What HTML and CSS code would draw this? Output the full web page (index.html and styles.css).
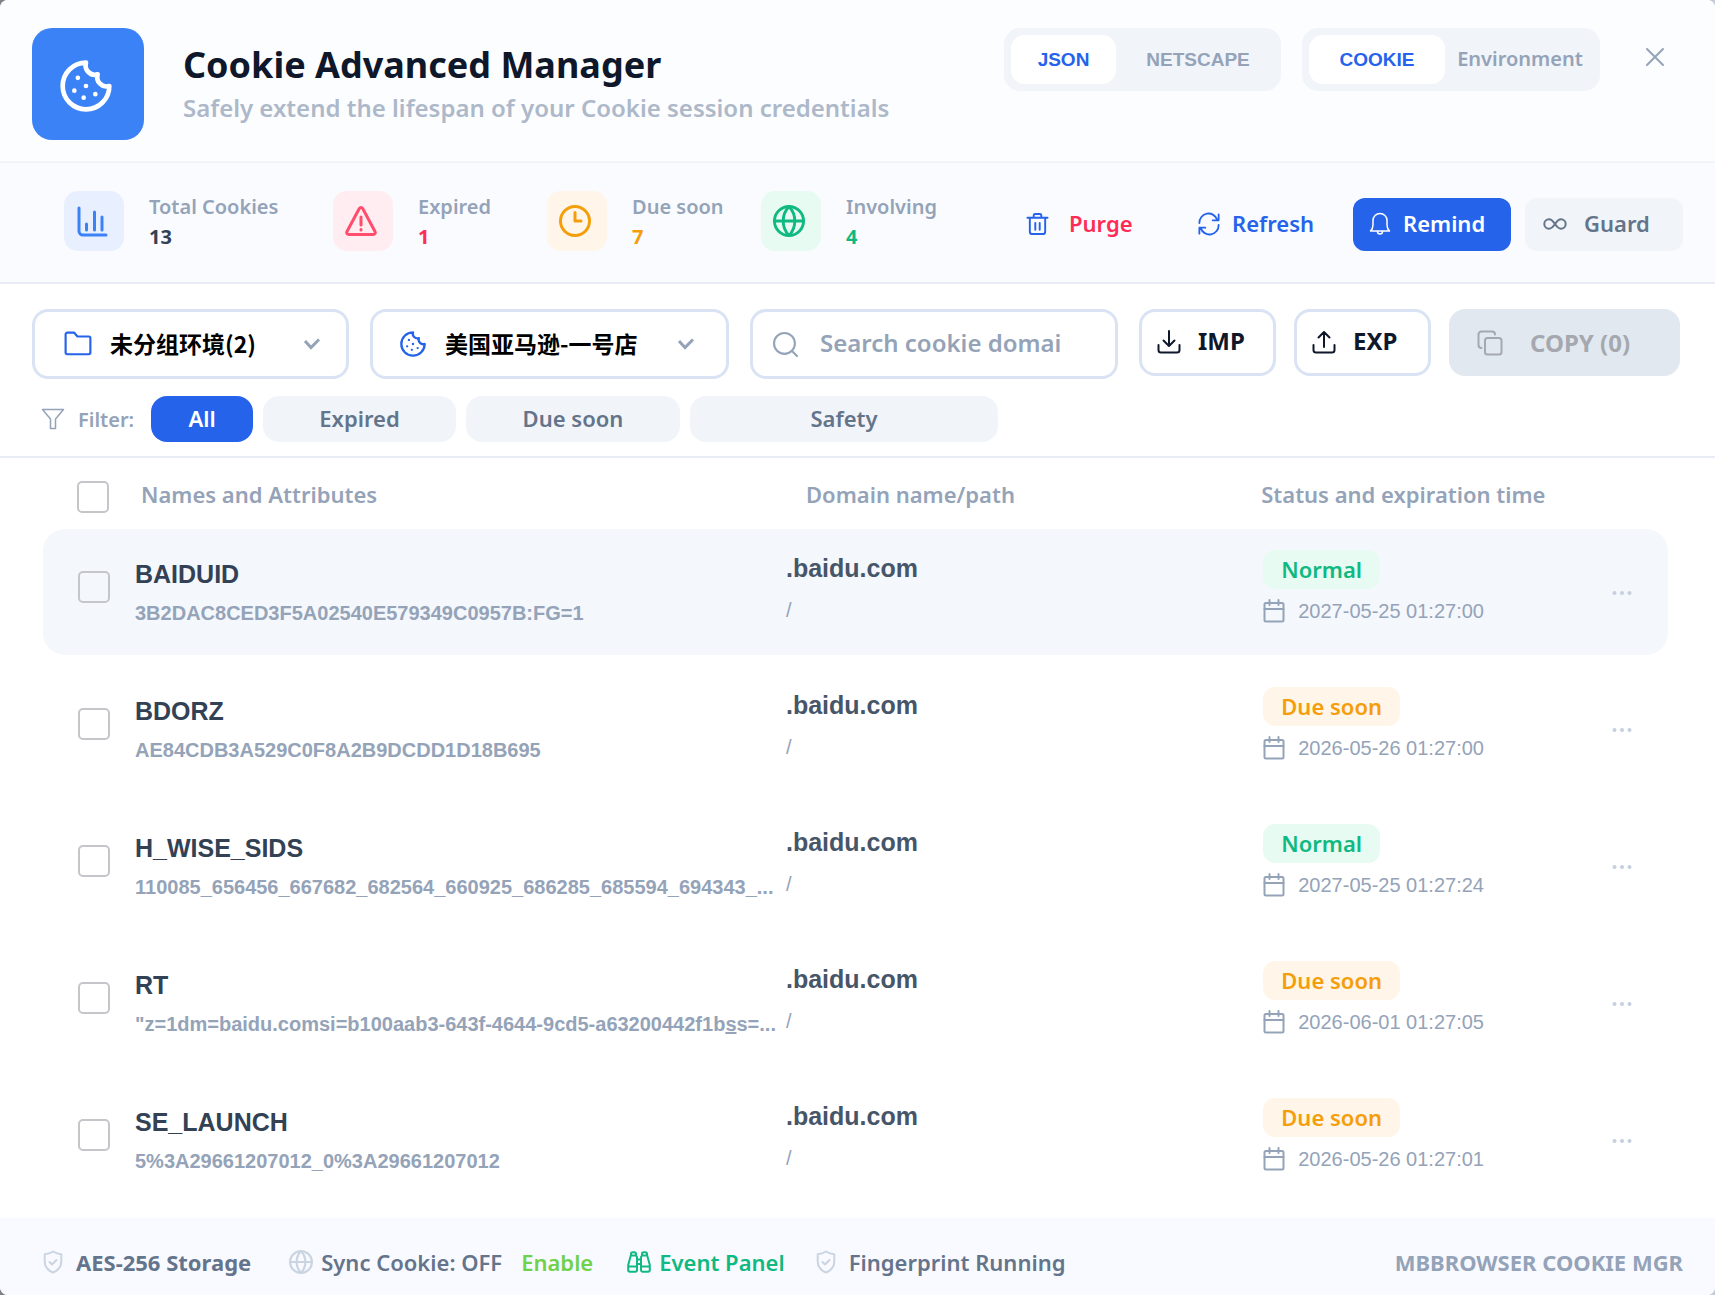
FILE: index.html
```html
<!DOCTYPE html>
<html lang="en">
<head>
<meta charset="utf-8">
<meta name="viewport" content="width=device-width, initial-scale=1">
<title>Cookie Advanced Manager</title>
<link rel="stylesheet" href="styles.css">
</head>
<body>
<svg class="sprite" aria-hidden="true">
  <symbol id="cookie" viewBox="0 0 24 24"><path d="M12 2a10 10 0 1 0 10 10 4 4 0 0 1-5-5 4 4 0 0 1-5-5"/><path d="M8.500 8.500v.01M16 15.500v.01M12 12v.01M11 17v.01M7 14v.01"/></symbol>
  <symbol id="globe" viewBox="1 1 22 22"><circle cx="12" cy="12" r="10"/><path d="M12 2a14.500 14.500 0 0 0 0 20 14.500 14.500 0 0 0 0-20M2 12h20"/></symbol>
  <symbol id="shield" viewBox="0 0 20 24"><path d="M10 1.500c2.500 1.600 5 2.500 8.300 2.800v7c0 5.500-3.300 9.200-8.300 11.200-5-2-8.300-5.700-8.300-11.200v-7C5 4 7.500 3.100 10 1.500z"/><path d="M6.500 12l2.500 2.500 4.500-4.500"/></symbol>
  <symbol id="chevron" viewBox="0 0 18 14"><path d="M2 4l6 6.500 8-8"/></symbol>
  <symbol id="calendar" viewBox="0 0 22 24"><rect x="1.500" y="4" width="19" height="18.500" rx="1.500"/><path d="M1.500 10h19M6.500 1v5M15.500 1v5"/></symbol>
  <symbol id="dots" viewBox="0 0 20 6"><circle cx="2.500" cy="3" r="2"/><circle cx="10" cy="3" r="2"/><circle cx="17.500" cy="3" r="2"/></symbol>
</svg>

<main class="window">
  <header class="header">
    <div class="logo"><svg class="icon"><use href="#cookie"/></svg></div>
    <div class="heading">
      <h1>Cookie Advanced Manager</h1>
      <p>Safely extend the lifespan of your Cookie session credentials</p>
    </div>
    <div class="segments">
      <div class="segment format">
        <button class="selected" type="button">JSON</button>
        <button type="button">NETSCAPE</button>
      </div>
      <div class="segment scope">
        <button class="selected" type="button">COOKIE</button>
        <button class="env" type="button">Environment</button>
      </div>
      <button class="close" type="button" aria-label="Close"><svg class="icon" viewBox="0 0 20 20"><path d="M2 2l16 16M18 2L2 18"/></svg></button>
    </div>
  </header>

  <section class="stats">
    <dl class="metrics">
      <div class="metric total">
        <span class="tile"><svg class="icon" viewBox="0 0 32 32"><path d="M3 3v23a4 4 0 0 0 4 4h23M10.500 19v6M18.500 7v18M26 12v13"/></svg></span>
        <div class="figure"><dt>Total Cookies</dt><dd>13</dd></div>
      </div>
      <div class="metric expired">
        <span class="tile"><svg class="icon" viewBox="0 0 32 32"><path d="M14.300 3.500a2 2 0 0 1 3.400 0l12.300 23a2 2 0 0 1-1.700 3H3.700a2 2 0 0 1-1.700-3zM16 12v8M16 24.500v.5"/></svg></span>
        <div class="figure"><dt>Expired</dt><dd>1</dd></div>
      </div>
      <div class="metric due">
        <span class="tile"><svg class="icon" viewBox="0 0 32 32"><circle cx="16" cy="16" r="14.500"/><path d="M16 7.500V16h6"/></svg></span>
        <div class="figure"><dt>Due soon</dt><dd>7</dd></div>
      </div>
      <div class="metric involving">
        <span class="tile"><svg class="icon globe"><use href="#globe"/></svg></span>
        <div class="figure"><dt>Involving</dt><dd>4</dd></div>
      </div>
    </dl>
    <div class="actions">
      <button class="purge" type="button"><svg class="icon" viewBox="0 0 24 24"><path d="M1.500 5.500h21M8 5.500V3a1.500 1.500 0 0 1 1.500-1.500h5A1.500 1.500 0 0 1 16 3v2.500M4 5.500V20a2.500 2.500 0 0 0 2.500 2.500h11A2.500 2.500 0 0 0 20 20V5.500M9.700 11v7M14.300 11v7"/></svg>Purge</button>
      <button class="refresh" type="button"><svg class="icon" viewBox="0 0 24 24"><path d="M1.500 11A10 10 0 0 1 21 7.500M22.500 1.500V8H16M22.500 13A10 10 0 0 1 3 16.500M1.500 22.500V16H8"/></svg>Refresh</button>
      <button class="remind" type="button"><svg class="icon" viewBox="0 0 24 24"><path d="M2.500 19c1.500-1.500 2.500-3.500 2.500-6V8.500a7 7 0 0 1 14 0V13c0 2.500 1 4.500 2.500 6zM9.500 19.500a2.500 2.500 0 0 0 5 0"/></svg>Remind</button>
      <button class="guard" type="button"><svg class="icon" viewBox="0 0 24 24"><path d="M12 12c-2-3-3.500-4.700-6-4.700a4.700 4.700 0 0 0 0 9.400c2.500 0 4-1.700 6-4.700s3.500-4.700 6-4.700a4.700 4.700 0 0 1 0 9.400c-2.500 0-4-1.700-6-4.700z"/></svg>Guard</button>
    </div>
  </section>

  <section class="tools">
    <div class="toolbar">
      <label class="field group">
        <svg class="icon" viewBox="0 0 26 24"><path d="M1.500 3A1.500 1.500 0 0 1 3 1.500h6.500L12.500 5H23a1.500 1.500 0 0 1 1.500 1.500V20a1.500 1.500 0 0 1-1.500 1.500H3A1.500 1.500 0 0 1 1.500 20z"/></svg>
        <select aria-label="Environment group"><option>未分组环境(2)</option></select>
        <svg class="chevron"><use href="#chevron"/></svg>
      </label>
      <label class="field shop">
        <svg class="icon"><use href="#cookie"/></svg>
        <select aria-label="Environment"><option>美国亚马逊-一号店</option></select>
        <svg class="chevron"><use href="#chevron"/></svg>
      </label>
      <label class="field search">
        <svg class="icon" viewBox="0 0 24 24"><circle cx="11" cy="11" r="10"/><path d="M18.500 18.500L23 23"/></svg>
        <input type="search" placeholder="Search cookie domai" aria-label="Search cookie domain">
      </label>
      <div class="transfer">
        <button class="outline" type="button"><svg class="icon" viewBox="0 0 24 24"><path d="M1.500 15v5a2.500 2.500 0 0 0 2.500 2.500h16a2.500 2.500 0 0 0 2.500-2.500v-5M12 1v15M6.500 10.500L12 16l5.500-5.500"/></svg>IMP</button>
        <button class="outline" type="button"><svg class="icon" viewBox="0 0 24 24"><path d="M1.500 15v5a2.500 2.500 0 0 0 2.500 2.500h16a2.500 2.500 0 0 0 2.500-2.500v-5M12 17V2M6.500 7.500L12 2l5.500 5.500"/></svg>EXP</button>
        <button class="copy" type="button" disabled><svg class="icon" viewBox="0 0 26 26"><rect x="8" y="8" width="16.500" height="16.500" rx="2.500"/><path d="M4.500 18A3 3 0 0 1 1.500 15V4.500a3 3 0 0 1 3-3H15a3 3 0 0 1 3 3"/></svg>COPY (0)</button>
      </div>
    </div>
    <div class="filters">
      <svg class="icon" viewBox="0 0 24 22"><path d="M1.500 1.500h21L14.500 11v9.500h-5V11z"/></svg>
      <span>Filter:</span>
      <button class="all" type="button">All</button>
      <button class="f-expired" type="button">Expired</button>
      <button class="f-due" type="button">Due soon</button>
      <button class="f-safety" type="button">Safety</button>
    </div>
  </section>

  <section class="list">
    <table>
      <colgroup><col class="c-check"><col class="c-name"><col class="c-domain"><col><col class="c-more"></colgroup>
      <thead>
        <tr><th><input type="checkbox" aria-label="Select all"></th><th>Names and Attributes</th><th>Domain name/path</th><th>Status and expiration time</th><th></th></tr>
      </thead>
      <tbody>
        <tr class="active">
          <td><input type="checkbox" aria-label="Select BAIDUID"></td>
          <td><div class="name">BAIDUID</div><div class="value">3B2DAC8CED3F5A02540E579349C0957B:FG=1</div></td>
          <td><div class="domain">.baidu.com</div><div class="path">/</div></td>
          <td><span class="badge ok">Normal</span><div class="date"><svg class="icon"><use href="#calendar"/></svg>2027-05-25 01:27:00</div></td>
          <td><button class="more" type="button" aria-label="More"><svg><use href="#dots"/></svg></button></td>
        </tr>
        <tr>
          <td><input type="checkbox" aria-label="Select BDORZ"></td>
          <td><div class="name">BDORZ</div><div class="value">AE84CDB3A529C0F8A2B9DCDD1D18B695</div></td>
          <td><div class="domain">.baidu.com</div><div class="path">/</div></td>
          <td><span class="badge soon">Due soon</span><div class="date"><svg class="icon"><use href="#calendar"/></svg>2026-05-26 01:27:00</div></td>
          <td><button class="more" type="button" aria-label="More"><svg><use href="#dots"/></svg></button></td>
        </tr>
        <tr>
          <td><input type="checkbox" aria-label="Select H_WISE_SIDS"></td>
          <td><div class="name">H_WISE_SIDS</div><div class="value">110085_656456_667682_682564_660925_686285_685594_694343_...</div></td>
          <td><div class="domain">.baidu.com</div><div class="path">/</div></td>
          <td><span class="badge ok">Normal</span><div class="date"><svg class="icon"><use href="#calendar"/></svg>2027-05-25 01:27:24</div></td>
          <td><button class="more" type="button" aria-label="More"><svg><use href="#dots"/></svg></button></td>
        </tr>
        <tr>
          <td><input type="checkbox" aria-label="Select RT"></td>
          <td><div class="name">RT</div><div class="value">"z=1dm=baidu.comsi=b100aab3-643f-4644-9cd5-a63200442f1b<u>s</u>s=...</div></td>
          <td><div class="domain">.baidu.com</div><div class="path">/</div></td>
          <td><span class="badge soon">Due soon</span><div class="date"><svg class="icon"><use href="#calendar"/></svg>2026-06-01 01:27:05</div></td>
          <td><button class="more" type="button" aria-label="More"><svg><use href="#dots"/></svg></button></td>
        </tr>
        <tr>
          <td><input type="checkbox" aria-label="Select SE_LAUNCH"></td>
          <td><div class="name">SE_LAUNCH</div><div class="value">5%3A29661207012_0%3A29661207012</div></td>
          <td><div class="domain">.baidu.com</div><div class="path">/</div></td>
          <td><span class="badge soon">Due soon</span><div class="date"><svg class="icon"><use href="#calendar"/></svg>2026-05-26 01:27:01</div></td>
          <td><button class="more" type="button" aria-label="More"><svg><use href="#dots"/></svg></button></td>
        </tr>
      </tbody>
    </table>
  </section>

  <footer class="footer">
    <span class="note storage"><svg class="icon"><use href="#shield"/></svg>AES-256 Storage</span>
    <span class="note sync"><svg class="icon"><use href="#globe"/></svg>Sync Cookie: OFF</span>
    <a class="enable" href="#">Enable</a>
    <a class="note events" href="#"><svg class="icon" viewBox="0 0 24 22"><path d="M4 4.500V3a1.800 1.800 0 0 1 1.800-1.800h1.400A1.800 1.800 0 0 1 9 3v1.500zM15 4.500V3a1.800 1.800 0 0 1 1.800-1.800h1.400A1.800 1.800 0 0 1 20 3v1.500zM3.800 4.500L1.200 14v5a1.800 1.800 0 0 0 1.800 1.800h5.200A1.800 1.800 0 0 0 10 19V6L9 4.500M20.200 4.500l2.600 9.500v5a1.800 1.800 0 0 1-1.800 1.800h-5.200A1.800 1.800 0 0 1 14 19V6l1-1.500M1.200 15.500h8.800M14 15.500h8.800M10 8.500h4M10 13h4"/></svg>Event Panel</a>
    <span class="note finger"><svg class="icon"><use href="#shield"/></svg>Fingerprint Running</span>
    <span class="brand">MBBROWSER COOKIE MGR</span>
  </footer>
</main>
</body>
</html>
```
FILE: styles.css
```css
* { box-sizing: border-box; }

body {
  margin: 0;
  background: linear-gradient(90deg, #7d8188, #c6cdd8);
  font-family: "Noto Sans", "Noto Sans CJK SC", sans-serif;
  font-size: 22px;
  font-weight: 600;
  color: #64748b;
}

button, input, select {
  margin: 0;
  padding: 0;
  border: 0;
  background: none;
  font: inherit;
  color: inherit;
}

h1, p, dl, dd { margin: 0; }
a { color: inherit; text-decoration: none; }

.sprite { display: none; }

.icon {
  flex: none;
  width: 24px;
  height: 24px;
  fill: none;
  stroke: currentColor;
  stroke-width: 2;
  stroke-linecap: round;
  stroke-linejoin: round;
}

.window {
  display: flex;
  flex-direction: column;
  min-height: 100vh;
  overflow: hidden;
  border-radius: 8px;
  background: #fff;
}

/* Header */
.header {
  display: flex;
  align-items: flex-start;
  gap: 39px;
  padding: 28px 26px 21px 32px;
  border-bottom: 2px solid #f1f4f9;
  background: #fcfdff;
}

.logo {
  display: flex;
  flex: none;
  align-items: center;
  justify-content: center;
  width: 112px;
  height: 112px;
  padding: 4px 4px 0 0;
  border-radius: 20px;
  background: #3b82f6;
  color: #fff;
}
.logo .icon { width: 56px; height: 56px; }

.heading { padding-top: 12px; white-space: nowrap; }
.heading h1 { font-size: 36px; line-height: 50px; font-weight: 700; color: #0f172a; }
.heading p { font-size: 24px; line-height: 36px; color: #adb8c9; }

.segments { display: flex; gap: 21px; margin-left: auto; }

.segment {
  display: flex;
  height: 63px;
  padding: 7px;
  border-radius: 16px;
  background: #f1f4f9;
  font-family: "Liberation Sans", sans-serif;
  font-size: 19px;
  font-weight: 700;
  color: #94a3b8;
}
.segment button { border-radius: 14px; }
.segment .selected { background: #fff; color: #2563eb; }
.format button:first-child { width: 105px; }
.format button:last-child { width: 158px; padding-left: 6px; }
.scope .selected { width: 136px; }
.segment .env {
  width: 148px;
  padding: 0 0 2px 2px;
  font-family: "Noto Sans", sans-serif;
  font-size: 20px;
  font-weight: 600;
}

.close { width: 68px; height: 60px; color: #94a3b8; }
.close .icon { width: 20px; height: 20px; }

/* Statistics */
.stats {
  display: flex;
  align-items: center;
  justify-content: space-between;
  height: 121px;
  padding: 0 32px 0 64px;
  border-bottom: 2px solid #e8edf5;
  background: #f9fbff;
}

.metrics { display: flex; margin-bottom: 4px; font-size: 20px; line-height: 30px; }
.metric { display: flex; gap: 25px; width: 214px; height: 60px; white-space: nowrap; }
.metric.total { width: 269px; }
.figure { padding-top: 1px; }
.metric dt { color: #94a3b8; }
.metric dd { font-weight: 700; }

.tile {
  display: flex;
  flex: none;
  align-items: center;
  width: 60px;
  height: 60px;
  padding-left: 12px;
  border-radius: 14px;
}
.tile .icon { width: 32px; height: 32px; stroke-width: 3; }
.tile .globe { stroke-width: 2; }

.total .tile { background: #e8efff; color: #3b82f6; }
.total dd { color: #334155; }
.expired .tile { background: #ffedf1; color: #ff4d6d; }
.expired dd { color: #ff2d55; }
.due .tile { background: #fff5e8; color: #f59e0b; }
.due dd { color: #f59e0b; }
.involving .tile { background: #e8fbf3; color: #10b981; }
.involving dd { color: #10b981; }

.actions { display: flex; padding-top: 4px; }
.actions button {
  display: flex;
  align-items: center;
  height: 53px;
  padding: 0 0 4px;
  border-radius: 12px;
  white-space: nowrap;
}
.actions .icon { margin-top: 3px; }
.purge { gap: 20px; width: 172px; color: #ff2d55; }
.purge .icon { width: 23px; color: #2563eb; }
.refresh { gap: 12px; width: 155px; color: #2563eb; }
.refresh .icon { width: 22px; }
.actions .remind {
  gap: 11px;
  width: 158px;
  margin-right: 14px;
  padding-left: 15px;
  background: #2563eb;
  color: #fff;
}
.guard { gap: 17px; width: 158px; }
.actions .guard { padding-left: 18px; background: #f1f4f9; }
.remind .icon { stroke-width: 1.5px; }

/* Toolbar and filters */
.tools {
  padding: 25px 35px 14px 32px;
  border-bottom: 2px solid #e8edf5;
}

.toolbar { display: flex; align-items: flex-start; gap: 21px; font-size: 24px; }

.field {
  display: flex;
  align-items: center;
  min-width: 0;
  height: 70px;
  border: 3px solid #d9e3f3;
  border-radius: 16px;
}
.field.group { flex: 1 1 317px; padding: 0 25px 0 29px; }
.field.shop { flex: 1 1 359px; padding: 0 31px 0 26px; }
.field.search { flex: 1 1 368px; gap: 22px; padding: 0 20px; color: #94a3b8; }
.field .icon { width: 28px; height: 26px; color: #2563eb; }
.shop .icon { height: 28px; }
.field.search .icon { width: 25px; height: 25px; color: #94a3b8; }
.field select {
  flex: 1;
  min-width: 0;
  margin-left: 18px;
  padding-bottom: 2px;
  appearance: none;
  font-family: "Noto Sans CJK SC", sans-serif;
  font-size: 23px;
  font-weight: 700;
  color: #000;
}
.field input { flex: 1; min-width: 0; padding-bottom: 3px; appearance: none; outline: 0; }
.field input::placeholder { color: #94a3b8; opacity: 1; }
.chevron {
  flex: none;
  width: 18px;
  height: 14px;
  fill: none;
  stroke: #94a3b8;
  stroke-width: 3;
}

.transfer { display: flex; flex: none; gap: 18px; }
.transfer button {
  display: flex;
  align-items: center;
  height: 67px;
  border-radius: 16px;
  font-weight: 700;
  white-space: nowrap;
}
.transfer .outline {
  gap: 17px;
  width: 137px;
  padding: 0 0 4px 15px;
  border: 3px solid #d9e3f3;
  color: #0f172a;
}
.outline .icon { margin-top: 2px; }
.transfer .copy {
  gap: 27px;
  width: 231px;
  padding-left: 28px;
  background: #e2e8f0;
  color: #a5a8ae;
}
.copy .icon { width: 26px; height: 26px; }

.filters { display: flex; align-items: center; gap: 10px; margin-top: 17px; }
.filters .icon { margin-left: 9px; color: #94a3b8; stroke-width: 1.5px; }
.filters span { width: 63px; margin-left: 3px; font-size: 20px; color: #94a3b8; }
.filters button { height: 46px; padding-bottom: 2px; border-radius: 16px; background: #f1f4f9; }
.filters .all { width: 102px; background: #2563eb; color: #fff; }
.f-expired { width: 193px; }
.f-due { width: 214px; }
.f-safety { width: 308px; }

/* Cookie list */
.list { flex: 1; padding: 0 47px 0 43px; }

table {
  width: 100%;
  table-layout: fixed;
  border-collapse: separate;
  border-spacing: 0 11px;
}
.c-check { width: 92px; }
.c-name { width: 40%; }
.c-domain { width: 29%; }
.c-more { width: 120px; }

th {
  height: 49px;
  padding: 0;
  text-align: left;
  font-weight: 600;
  white-space: nowrap;
  color: #94a3b8;
}
th:nth-child(2) { padding-left: 6px; }
th:nth-child(3) { padding-left: 21px; }
th:nth-child(4) { padding-left: 5px; }

td { height: 126px; padding: 0; vertical-align: top; white-space: nowrap; }
td:first-child { padding-top: 42px; border-radius: 22px 0 0 22px; }
td:nth-child(2) { padding-top: 29px; }
td:nth-child(3) { padding: 23px 0 0 1px; }
td:nth-child(4) { padding: 21px 0 0 7px; }
td:last-child { padding: 48px 36px 0 0; text-align: right; border-radius: 0 22px 22px 0; }
.active td { background: #f4f7fc; }

input[type="checkbox"] {
  display: block;
  width: 32px;
  height: 32px;
  margin-left: 35px;
  appearance: none;
  border: 2px solid #c4c6ca;
  border-radius: 5px;
}
th input[type="checkbox"] { margin: 6px 0 0 34px; }

.name, .value, .domain, .path, .date { font-family: "Liberation Sans", sans-serif; }
.name, .domain { font-size: 25px; line-height: 32px; font-weight: 700; color: #334155; }
.domain { color: #475569; }
.value, .path { margin-top: 7px; font-size: 20px; line-height: 32px; font-weight: 700; color: #94a3b8; }
.path { margin-top: 10px; font-weight: 400; }

.badge {
  display: inline-block;
  padding: 0 18px;
  border-radius: 12px;
  line-height: 39px;
}
.ok { background: #e8fbf3; color: #10b981; }
.soon { background: #fff5e8; color: #f59e0b; }

.date {
  display: flex;
  align-items: center;
  gap: 13px;
  margin-top: 8px;
  font-size: 20px;
  font-weight: 400;
  line-height: 28px;
  color: #94a3b8;
}
.date .icon { width: 22px; }

.more svg { display: block; width: 20px; height: 6px; fill: #c5cfdd; }
.more { height: 32px; }

/* Footer */
.footer {
  display: flex;
  align-items: center;
  height: 77px;
  padding: 11px 32px 0 43px;
  background: #f8faff;
  white-space: nowrap;
}
.note { display: flex; align-items: center; }
.note .icon { color: #cbd5e1; }
.storage { gap: 13px; margin-right: 38px; font-weight: 700; }
.storage .icon, .finger .icon { width: 20px; }
.sync { gap: 8px; margin-right: 19px; }
.enable { margin-right: 34px; color: #70d14b; }
.note.events { gap: 8px; margin-right: 31px; color: #10b981; }
.events .icon { color: #10b981; }
.finger { gap: 13px; }
.brand { margin-left: auto; font-weight: 700; color: #94a3b8; }
```
